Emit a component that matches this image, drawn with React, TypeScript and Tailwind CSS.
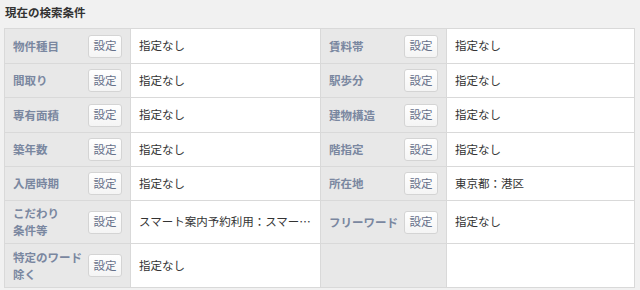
import React from 'react';

interface Condition {
  label: React.ReactNode;
  value: string;
}

const rows: [Condition, Condition | null][] = [
  [{ label: '物件種目', value: '指定なし' }, { label: '賃料帯', value: '指定なし' }],
  [{ label: '間取り', value: '指定なし' }, { label: '駅歩分', value: '指定なし' }],
  [{ label: '専有面積', value: '指定なし' }, { label: '建物構造', value: '指定なし' }],
  [{ label: '築年数', value: '指定なし' }, { label: '階指定', value: '指定なし' }],
  [{ label: '入居時期', value: '指定なし' }, { label: '所在地', value: '東京都：港区' }],
  [
    { label: <>こだわり<br />条件等</>, value: 'スマート案内予約利用：スマート案内予約' },
    { label: 'フリーワード', value: '指定なし' },
  ],
  [{ label: <>特定のワード<br />除く</>, value: '指定なし' }, null],
];

const rowHeights = ['h-[35px]', 'h-[34px]', 'h-[35px]', 'h-[34px]', 'h-[34px]', 'h-[43px]', 'h-[44px]'];

const SetButton = () => (
  <button
    type="button"
    className="shrink-0 w-[34px] h-[23px] rounded-[3px] border border-[#d4d4d4] bg-gradient-to-b from-white to-[#f4f4f4] text-[11.5px] text-[#66708a] leading-none"
  >
    設定
  </button>
);

const LabelCell = ({ item }: { item: Condition | null }) => (
  <td className="bg-[#e8e8e8] border border-[#d9d9d9] pl-[8px] pr-[8px] py-[3px] align-middle">
    {item && (
      <div className="flex items-center justify-between">
        <span className="whitespace-nowrap font-bold text-[11.5px] leading-[17px] text-[#7a87a0]">
          {item.label}
        </span>
        <SetButton />
      </div>
    )}
  </td>
);

const ValueCell = ({ item }: { item: Condition | null }) => (
  <td className="bg-white border border-[#d9d9d9] px-[8px] align-middle">
    {item && (
      <div className="truncate max-w-[172px] text-[11.5px] text-[#333]">{item.value}</div>
    )}
  </td>
);

export default function App() {
  return (
    <div
      className="w-[640px] h-[290px] bg-[#f1f1f1] pl-[4px] pr-[6px] pt-[3px] overflow-hidden"
      style={{ fontFamily: '"Noto Sans CJK JP", "Noto Sans", sans-serif' }}
    >
      <h2 className="pl-[1px] text-[11.5px] font-bold text-[#333] leading-[18px] mb-[7px]">現在の検索条件</h2>
      <table className="w-[630px] border-collapse table-fixed">
        <colgroup>
          <col className="w-[126px]" />
          <col className="w-[190px]" />
          <col className="w-[126px]" />
          <col className="w-[188px]" />
        </colgroup>
        <tbody>
          {rows.map(([left, right], i) => (
            <tr key={i} className={rowHeights[i]}>
              <LabelCell item={left} />
              <ValueCell item={left} />
              <LabelCell item={right} />
              <ValueCell item={right} />
            </tr>
          ))}
        </tbody>
      </table>
    </div>
  );
}
